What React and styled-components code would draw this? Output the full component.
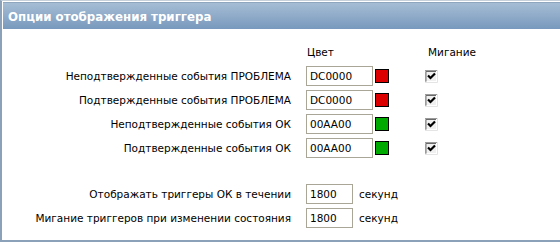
import React from 'react'
import styled, { createGlobalStyle } from 'styled-components'

const Global = createGlobalStyle`
  body {
    margin: 0;
    background: #ffffff;
    font-family: "DejaVu Sans", Verdana, sans-serif;
    font-size: 10.5px;
    color: #000000;
  }
`

const Panel = styled.div`
  width: 560px;
  height: 242px;
  box-sizing: border-box;
  border-top: 1px solid #c6d0db;
  border-left: 2px solid #8aa1b9;
  border-bottom: 2px solid #8aa1b9;
  background: #ffffff;
  display: flex;
  flex-direction: column;
`

const Header = styled.div`
  margin: 1px 0 0 1px;
  height: 27px;
  background: linear-gradient(#a6bdd5, #7899bd);
  border-top: 1px solid #8ea6be;
  color: #ffffff;
  font-weight: bold;
  font-size: 11.8px;
  display: flex;
  align-items: center;
  padding: 1px 0 0 5px;
  box-sizing: border-box;
`

const Body = styled.div`
  padding-top: 11px;
  display: flex;
  flex-direction: column;
`

const Row = styled.div`
  display: flex;
  align-items: center;
  height: 24px;
`

const Label = styled.div`
  width: 289px;
  text-align: right;
  margin-right: 15px;
  white-space: nowrap;
`

const Heading = styled.div`
  width: ${p => p.$w}px;
  padding-left: 1px;
`

const Field = styled.div`
  width: ${p => p.$w}px;
  height: 20px;
  box-sizing: border-box;
  border: 1px solid #a9a597;
  padding-left: 3px;
  display: flex;
  align-items: center;
  color: #000000;
`

const Swatch = styled.div`
  width: 14px;
  height: 14px;
  box-sizing: border-box;
  border: 1px solid #000000;
  background: ${p => p.$color};
  margin-left: 2px;
  margin-right: 36px;
`

const Unit = styled.span`
  margin-left: 6px;
`

const Spacer = styled.div`
  height: 22px;
`

const Check = () => (
  <svg width="13" height="13" viewBox="0 0 13 13">
    <rect x="0" y="0" width="13" height="13" fill="#ffffff" />
    <path d="M0 12.5V0.5H12" stroke="#9a9a9a" fill="none" />
    <path d="M1 11.5V1.5H11" stroke="#6a6a6a" fill="none" />
    <path d="M12.5 0V12.5H0" stroke="#e4e4e4" fill="none" />
    <rect x="2" y="2" width="9" height="9" fill="#f0f0f0" />
    <path d="M3 5.5L5.5 8L10 3.5" stroke="#000000" strokeWidth="2.2" fill="none" />
  </svg>
)

const colorRows = [
  { label: 'Неподтвержденные события ПРОБЛЕМА', value: 'DC0000', color: '#dc0000' },
  { label: 'Подтвержденные события ПРОБЛЕМА', value: 'DC0000', color: '#dc0000' },
  { label: 'Неподтвержденные события ОК', value: '00AA00', color: '#00aa00' },
  { label: 'Подтвержденные события ОК', value: '00AA00', color: '#00aa00' },
]

const timeRows = [
  { label: 'Отображать триггеры ОК в течении', value: '1800' },
  { label: 'Мигание триггеров при изменении состояния', value: '1800' },
]

const App = () => (
  <>
    <Global />
    <Panel>
      <Header>Опции отображения триггера</Header>
      <Body>
        <Row>
          <Label />
          <Heading $w={120}>Цвет</Heading>
          <Heading $w={80}>Мигание</Heading>
        </Row>
        {colorRows.map(r => (
          <Row key={r.label}>
            <Label>{r.label}</Label>
            <Field $w={67}>{r.value}</Field>
            <Swatch $color={r.color} />
            <Check />
          </Row>
        ))}
        <Spacer />
        {timeRows.map(r => (
          <Row key={r.label}>
            <Label>{r.label}</Label>
            <Field $w={47}>{r.value}</Field>
            <Unit>секунд</Unit>
          </Row>
        ))}
      </Body>
    </Panel>
  </>
)

export default App
